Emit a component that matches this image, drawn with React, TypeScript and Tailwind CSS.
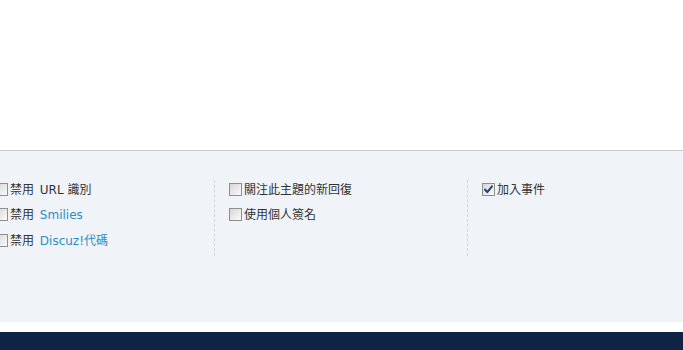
import React from 'react';

interface OptionProps {
  label: React.ReactNode;
  checked?: boolean;
}

const Box: React.FC<{ checked?: boolean }> = ({ checked }) => (
  <span className="relative mr-[2px] inline-flex h-[13px] w-[13px] shrink-0 items-center justify-center border border-[#8f8f8f] bg-gradient-to-br from-[#d6d6d6] to-[#fbfbfb]">
    {checked && (
      <svg viewBox="0 0 11 11" className="h-[11px] w-[11px]">
        <path d="M2 5.5 L4.3 8.2 L9 2.3" fill="none" stroke="#25407a" strokeWidth="2" strokeLinecap="round" strokeLinejoin="round" />
      </svg>
    )}
  </span>
);

const Option: React.FC<OptionProps> = ({ label, checked }) => (
  <label className="flex h-[18px] items-center whitespace-nowrap text-[12px] text-[#333]">
    <Box checked={checked} />
    <span className="pt-[1px]">{label}</span>
  </label>
);

export default function App() {
  return (
    <div className="flex h-[350px] w-[683px] flex-col overflow-hidden bg-white font-['DejaVu_Sans','Noto_Sans_CJK_TC',sans-serif]">
      <div className="h-[150px] bg-white" />
      <div className="h-[172px] border-t border-[#c8c8c8] bg-[#f0f3f8] pt-[29px]">
        <div className="-ml-[5px] flex h-[76px]">
          <div className="flex w-[219px] flex-col gap-[7.5px]">
            <Option label={<>禁用 <span className="ml-[2px]">URL 識別</span></>} />
            <Option label={<>禁用 <span className="ml-[2px] text-[#2b8ec0]">Smilies</span></>} />
            <Option label={<>禁用 <span className="ml-[2px] text-[#2b8ec0]">Discuz!代碼</span></>} />
          </div>
          <div className="flex w-[253px] flex-col gap-[7.5px] border-l border-dashed border-[#d2d6dd] pl-[14px]">
            <Option label="關注此主題的新回復" />
            <Option label="使用個人簽名" />
          </div>
          <div className="flex flex-1 flex-col gap-[7.5px] border-l border-dashed border-[#d2d6dd] pl-[14px]">
            <Option label="加入事件" checked />
          </div>
        </div>
      </div>
      <div className="h-[10px] bg-white" />
      <div className="flex-1 bg-[#0f2345]" />
    </div>
  );
}
